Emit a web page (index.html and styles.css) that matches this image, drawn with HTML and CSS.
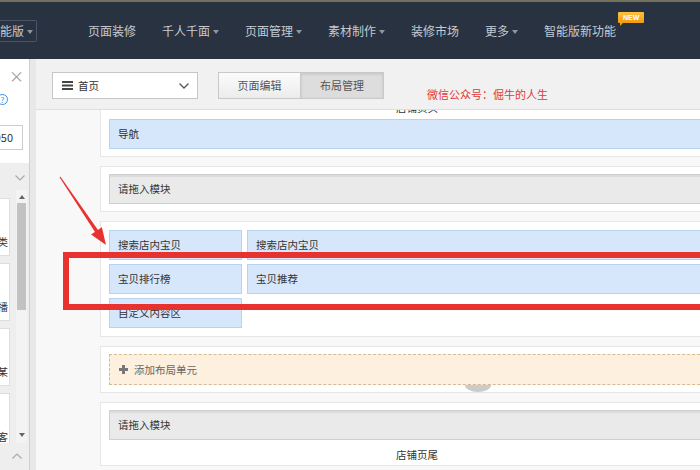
FILE: index.html
```html
<!DOCTYPE html>
<html lang="zh-CN">
<head>
    <meta charset="UTF-8">
    <meta name="viewport" content="width=device-width, initial-scale=1.0">
    <title>布局管理</title>
    <link rel="stylesheet" href="styles.css">
</head>
<body>
    <div class="topbar">
        <div class="edition">智能版<span class="caret"></span></div>
        <ul class="nav">
            <li>页面装修</li>
            <li>千人千面<span class="caret"></span></li>
            <li>页面管理<span class="caret"></span></li>
            <li>素材制作<span class="caret"></span></li>
            <li>装修市场</li>
            <li>更多<span class="caret"></span></li>
            <li class="nav-new">智能版新功能<span class="badge">NEW</span></li>
        </ul>
    </div>
    <div class="workspace">
        <aside class="panel">
            <div class="panel-close">×</div>
            <div class="panel-help"><span class="help-icon">?</span></div>
            <div class="panel-input">950</div>
            <div class="modules">
                <div class="modules-head">
                    <svg width="10" height="6" viewBox="0 0 10 6"><polyline points="0.5,0.5 5,5 9.5,0.5" fill="none" stroke="#a9a9a9" stroke-width="1.2"/></svg>
                </div>
                <div class="modules-body">
                    <div class="module-list">
                        <div class="module-item">宝贝分类</div>
                        <div class="module-item">图片轮播</div>
                        <div class="module-item">某</div>
                        <div class="module-item">客</div>
                    </div>
                    <div class="scrollbar">
                        <span class="arrow-up"></span>
                        <div class="thumb"></div>
                        <span class="arrow-down"></span>
                    </div>
                </div>
                <div class="modules-foot">
                    <svg width="10" height="6" viewBox="0 0 10 6"><polyline points="0.5,5.5 5,1 9.5,5.5" fill="none" stroke="#a9a9a9" stroke-width="1.2"/></svg>
                </div>
            </div>
        </aside>
        <main class="main">
            <div class="toolbar">
                <div class="page-select">
                    <svg class="menu-icon" width="11" height="9" viewBox="0 0 11 9"><rect y="0" width="11" height="2" fill="#444"/><rect y="3.5" width="11" height="2" fill="#444"/><rect y="7" width="11" height="2" fill="#444"/></svg>
                    <span>首页</span>
                    <svg class="select-arrow" width="10" height="6" viewBox="0 0 10 6"><polyline points="0.5,0.5 5,5 9.5,0.5" fill="none" stroke="#555" stroke-width="1.3"/></svg>
                </div>
                <div class="mode-tabs">
                    <div class="mode-tab">页面编辑</div>
                    <div class="mode-tab active">布局管理</div>
                </div>
                <div class="wechat-note">微信公众号：倔牛的人生</div>
            </div>
            <div class="canvas">
                <div class="canvas-inner">
                    <div class="card">
                        <div class="card-label">店铺页头</div>
                        <div class="block block-blue">导航</div>
                    </div>
                    <div class="card">
                        <div class="block block-gray">请拖入模块</div>
                    </div>
                    <div class="card card-tall">
                        <div class="block-grid">
                            <div class="block block-blue">搜索店内宝贝</div>
                            <div class="block block-blue">搜索店内宝贝</div>
                            <div class="block block-blue">宝贝排行榜</div>
                            <div class="block block-blue">宝贝推荐</div>
                            <div class="block block-blue">自定义内容区</div>
                        </div>
                    </div>
                    <div class="card">
                        <div class="block-add"><span class="plus"></span>添加布局单元</div>
                        <span class="handle"></span>
                    </div>
                    <div class="card">
                        <div class="block block-gray">请拖入模块</div>
                        <div class="card-label foot">店铺页尾</div>
                    </div>
                </div>
            </div>
        </main>
    </div>
    <div class="mark-box"></div>
    <svg class="mark-arrow" width="700" height="470" viewBox="0 0 700 470">
        <polygon points="59.5,177.3 60.5,176.7 98.5,230.7 95.5,232.7" fill="#e8322f"/>
        <polygon points="106,245 91.1,234.5 101.9,227.3" fill="#e8322f"/>
    </svg>
</body>
</html>
```

FILE: styles.css
```css
* {
    margin: 0;
    padding: 0;
    box-sizing: border-box;
}
body {
    width: 700px;
    height: 470px;
    overflow: hidden;
    position: relative;
    font-family: "Noto Sans CJK SC", "Noto Sans", sans-serif;
    color: #333;
    background: #fff;
}

/* top navigation */
.topbar {
    height: 59px;
    border-top: 2px solid #74725c;
    background: #283240;
    display: flex;
    align-items: center;
    white-space: nowrap;
    color: #c5cad3;
    font-size: 12px;
}
.edition {
    margin-left: -19px;
    height: 22px;
    padding: 0 3px 0 6px;
    border: 1px solid #4a5466;
    border-radius: 2px;
    line-height: 20px;
}
.caret {
    display: inline-block;
    width: 0;
    height: 0;
    margin-left: 3px;
    border-left: 3px solid transparent;
    border-right: 3px solid transparent;
    border-top: 4px solid #8d95a1;
    vertical-align: middle;
}
.nav {
    list-style: none;
    display: flex;
    gap: 26px;
    margin-left: 51px;
}
.nav li {
    line-height: 18px;
    position: relative;
}
.badge {
    position: absolute;
    left: calc(100% + 2px);
    top: -10px;
    width: 26px;
    height: 11px;
    background: linear-gradient(#fcc23f, #f39a12);
    color: #fff;
    font-family: "Liberation Sans", sans-serif;
    font-size: 7px;
    font-weight: bold;
    line-height: 11px;
    text-align: center;
    border-radius: 1px;
}
.badge::after {
    content: "";
    position: absolute;
    left: 2px;
    bottom: -3px;
    border-left: 3px solid #f39a12;
    border-bottom: 3px solid transparent;
}

/* workspace */
.workspace {
    display: flex;
    height: 411px;
}

/* left module panel */
.panel {
    width: 30px;
    flex-shrink: 0;
    border-right: 1px solid #cfcfcf;
    display: flex;
    flex-direction: column;
    background: #fff;
}
.panel-close {
    height: 34px;
    line-height: 34px;
    text-align: right;
    padding-right: 5px;
    font-size: 15px;
    color: #9a9a9a;
}
.panel-help {
    height: 11px;
    margin-top: 1px;
}
.help-icon {
    display: block;
    width: 11px;
    height: 11px;
    margin-left: -3px;
    border: 1px solid #3d8ee0;
    border-radius: 50%;
    color: #3d8ee0;
    font-size: 8px;
    line-height: 9px;
    text-align: center;
}
.panel-input {
    margin: 20px 6px 0 -12px;
    height: 25px;
    border: 1px solid #cccccc;
    text-align: right;
    padding-right: 9px;
    line-height: 23px;
    font-size: 11px;
    color: #333;
}
.modules {
    flex: 1;
    margin-top: 13px;
    background: #eeeeee;
    display: flex;
    flex-direction: column;
    min-height: 0;
}
.modules-head {
    height: 27px;
    display: flex;
    justify-content: flex-end;
    align-items: center;
    padding: 3px 4px 0 0;
}
.modules-body {
    flex: 1;
    display: flex;
    overflow: hidden;
}
.module-list {
    width: 10px;
    padding-top: 8px;
}
.module-item {
    width: 30px;
    height: 58px;
    margin: 0 0 7px -20px;
    background: #fff;
    border: 1px solid #dddddd;
    display: flex;
    align-items: flex-end;
    justify-content: flex-end;
    padding: 0 1px 6px 0;
    font-size: 10.5px;
    line-height: 14px;
    white-space: nowrap;
    overflow: hidden;
}
.scrollbar {
    width: 11px;
    margin-left: 6px;
    background: #f3f3f3;
    display: flex;
    flex-direction: column;
    align-items: center;
}
.arrow-up,
.arrow-down {
    width: 0;
    height: 0;
    border-left: 3px solid transparent;
    border-right: 3px solid transparent;
}
.arrow-up {
    margin-top: 5px;
    border-bottom: 4px solid #666;
}
.arrow-down {
    margin-top: auto;
    margin-bottom: 6px;
    border-top: 4px solid #666;
}
.thumb {
    width: 9px;
    height: 107px;
    margin-top: 4px;
    background: #c2c2c2;
}
.modules-foot {
    height: 27px;
    display: flex;
    justify-content: flex-end;
    align-items: center;
    padding: 0 7px 2px 0;
}

/* main */
.main {
    flex: 1;
    min-width: 0;
    border-left: 6px solid #e8e8e8;
    background: #f8f8f8;
    display: flex;
    flex-direction: column;
    overflow: hidden;
}
.toolbar {
    height: 51px;
    flex-shrink: 0;
    border-bottom: 1px solid #dedede;
    background: #f1f1f1;
    display: flex;
    align-items: flex-start;
    padding: 13px 0 0 16px;
    white-space: nowrap;
}
.page-select {
    width: 146px;
    height: 27px;
    border: 1px solid #c6c6c6;
    background: #fff;
    display: flex;
    align-items: center;
    padding: 0 8px 0 9px;
    font-size: 10.5px;
}
.menu-icon {
    margin-right: 5px;
}
.select-arrow {
    margin-left: auto;
}
.mode-tabs {
    display: flex;
    margin-left: 20px;
}
.mode-tab {
    width: 83px;
    height: 27px;
    border: 1px solid #c9c9c9;
    background: linear-gradient(#fbfbfb, #ececec);
    color: #555;
    font-size: 11px;
    line-height: 25px;
    text-align: center;
}
.mode-tab.active {
    border-left: none;
    background: #dddddd;
    box-shadow: inset 0 1px 3px rgba(0, 0, 0, 0.12);
}
.wechat-note {
    margin: 15px 0 0 43px;
    color: #e2393b;
    font-size: 11px;
    line-height: 14px;
}

/* layout canvas */
.canvas {
    flex: 1;
    overflow: hidden;
    padding-left: 64px;
}
.canvas-inner {
    margin-top: -20px;
}
.card {
    position: relative;
    width: 634px;
    margin-bottom: 9px;
    padding: 7px 8px;
    border: 1px solid #e6e6e6;
    background: #fff;
}
.card-tall {
    padding: 8px 8px;
}
.card-label {
    text-align: center;
    line-height: 20px;
    font-size: 10.5px;
    margin-bottom: 1px;
}
.card-label.foot {
    margin: 6px 0 -6px;
    line-height: 18px;
}
.block {
    height: 30px;
    border: 1px solid;
    padding-left: 8px;
    line-height: 28px;
    font-size: 10.5px;
    white-space: nowrap;
}
.block-blue {
    background: #d7e7fb;
    border-color: #b9d2f0;
}
.block-gray {
    background: #eaeaea;
    border-color: #cfcfcf;
    box-shadow: inset 0 2px 0 #dcdcdc;
}
.block-grid {
    display: grid;
    grid-template-columns: 133px 1fr;
    gap: 4px 5px;
}
.block-add {
    height: 31px;
    background: #fdf0de;
    border: 1px dashed #d6bb92;
    display: flex;
    align-items: center;
    padding-left: 9px;
    color: #666;
    font-size: 10.5px;
}
.plus {
    position: relative;
    width: 9px;
    height: 9px;
    margin-right: 6px;
}
.plus::before,
.plus::after {
    content: "";
    position: absolute;
    background: #777;
}
.plus::before {
    left: 3px;
    top: 0;
    width: 3px;
    height: 9px;
}
.plus::after {
    left: 0;
    top: 3px;
    width: 9px;
    height: 3px;
}
.handle {
    position: absolute;
    left: 364px;
    top: 38px;
    width: 26px;
    height: 7px;
    background: #cbcbcb;
    border-radius: 0 0 13px 13px / 0 0 7px 7px;
}

/* red annotations drawn over the screenshot */
.mark-box {
    position: absolute;
    left: 63px;
    top: 252px;
    width: 700px;
    height: 58px;
    border: 6px solid #e8322f;
}
.mark-arrow {
    position: absolute;
    left: 0;
    top: 0;
}
```
